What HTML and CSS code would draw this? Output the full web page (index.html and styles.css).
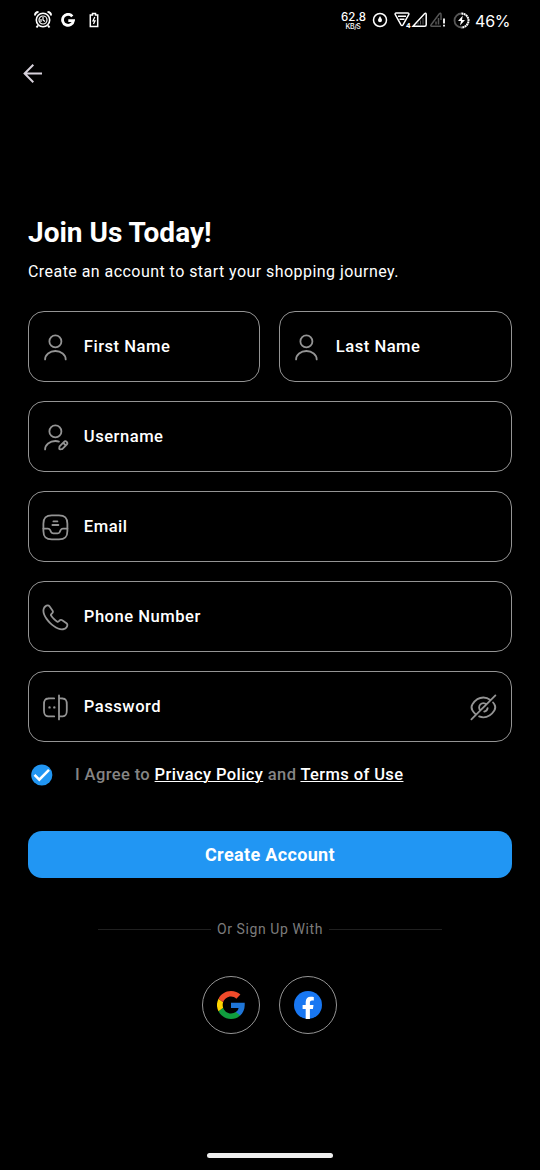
FILE: index.html
```html
<!DOCTYPE html>
<html lang="en">
<head>
<meta charset="utf-8">
<title>Create Account</title>
<link rel="stylesheet" href="styles.css">
</head>
<body>
<header class="status">
  <svg class="alarm" width="18" height="18" viewBox="0 0 18 18" fill="none" stroke="#fff"><circle cx="9" cy="9" r="6.7" stroke-width="1.6"/><circle cx="9" cy="9" r="4" stroke-width="1.200"/><path d="M1 4.500C1 2 2.500 1 4.500 1M13.500 1C15.500 1 17 2 17 4.500M4 14.500l-1.500 2M14 14.500l1.500 2" stroke-width="2"/><path d="M9 6v3l2 1.500M7 8v3" stroke-width="1.200"/></svg>
  <svg class="g-mono" width="14" height="14" viewBox="0 0 14 14" fill="none" stroke="#fff" stroke-width="2.800"><path d="M11.300 3.300A5.500 5.500 0 1 0 12.500 7.600H7.300"/></svg>
  <svg class="cell" width="10" height="16" viewBox="0 0 10 16" fill="none" stroke="#fff" stroke-width="1.500"><path d="M3.500 1.500h3V3h2.200v11.500H1.300V3h2.200z"/><path d="M5.800 5 4 8.800h2L4.500 12" stroke-width="1.300"/></svg>
  <div class="speed"><span class="rate">62.8</span><span class="unit">KB/S</span></div>
  <svg class="dial" width="16" height="16" viewBox="0 0 16 16"><circle cx="8" cy="8" r="6.500" fill="none" stroke="#fff" stroke-width="1.500"/><path d="M8 4c1 2 2 3 2 4.300a2 2 0 0 1-4 0C6 7 7 6 8 4z" fill="#fff"/></svg>
  <svg class="signals" width="52" height="18" viewBox="0 0 52 18" fill="none" stroke="#fff" stroke-width="1.500"><path d="M2.300 2h11.400c1.200 0 1.500.8 1 1.600L9 13.800c-.6 1-1.400 1-2 0L1.300 3.600c-.5-.8-.2-1.600 1-1.600zM4 5.200h8M5.500 8.200h5"/><path d="M19 15.200 30.500 2.700c.9-.8 1.700-.5 1.700.7v10.300c0 1-.5 1.500-1.500 1.500z"/><path d="M24 13.500v-2M26.500 13.500V9.500M29 13.500V7" stroke="#555" stroke-width="1"/><path d="M47 9V3.400c0-1.200-.8-1.500-1.700-.7L37.300 13.500c-.9 1-.6 1.700.5 1.700H47" stroke="#555"/><path d="M42 13.500v-3M44.500 13.500V7" stroke="#555"/><path d="M50 7.500v5M50 13.800v1.700" stroke-width="1.800"/><text x="12" y="17" class="net">4</text></svg>
  <svg class="charge" width="17" height="17" viewBox="0 0 17 17" fill="none"><circle cx="8.500" cy="8.500" r="7" stroke="#555" stroke-width="1.800"/><path d="M8.500 1.500a7 7 0 0 1 0 14" stroke="#fff" stroke-width="2" stroke-dasharray="1.700 .7"/><path d="M9.800 3.500 5 9h3l-1 4.500L12 8H9z" fill="#fff"/></svg>
  <span class="percent">46%</span>
</header>

<nav class="topbar">
  <svg width="20" height="20" viewBox="0 0 20 20" fill="none" stroke="#d8d2dc" stroke-width="2"><path d="M19 9.500H2M10.300 .8 1.600 9.500l8.700 8.700"/></svg>
</nav>

<main class="content">
  <h1 class="title">Join Us Today!</h1>
  <p class="subtitle">Create an account to start your shopping journey.</p>

  <form class="form">
    <div class="row">
      <div class="field"><svg class="icon" viewBox="0 0 24 24"><circle cx="12" cy="7" r="5"/><path d="M20.590 22c0-3.870-3.850-7-8.590-7s-8.590 3.130-8.590 7"/></svg><span class="label">First Name</span></div>
      <div class="field"><svg class="icon" viewBox="0 0 24 24"><circle cx="12" cy="7" r="5"/><path d="M20.590 22c0-3.870-3.850-7-8.590-7s-8.590 3.130-8.590 7"/></svg><span class="label last">Last Name</span></div>
    </div>
    <div class="field"><svg class="icon" viewBox="0 0 24 24"><circle cx="12" cy="7" r="5"/><path d="M19.210 15.740l-3.540 3.540c-.14.14-.27.4-.3.590l-.19 1.350c-.07.490.27.830.76.760l1.350-.19c.19-.03.46-.16.590-.3l3.540-3.540c.61-.61.9-1.320 0-2.220-.89-.89-1.600-.6-2.210.010zM18.700 16.250c.3 1.080 1.140 1.920 2.220 2.220M3.410 22c0-3.870 3.850-7 8.590-7 1.040 0 2.040.15 2.970.43"/></svg><span class="label">Username</span></div>
    <div class="field"><svg class="icon" viewBox="0 0 24 24"><path d="M9 22h6c5 0 7-2 7-7V9c0-5-2-7-7-7H9C4 2 2 4 2 9v6c0 5 2 7 7 7z"/><path d="M2 13h3.760c.76 0 1.450.43 1.790 1.110l.89 1.790C9 17 10 17 10.240 17h3.530c.76 0 1.450-.43 1.790-1.110l.89-1.790c.34-.68 1.030-1.110 1.790-1.110H22M10.340 7h3.330M9.500 10h5"/></svg><span class="label">Email</span></div>
    <div class="field"><svg class="icon" viewBox="0 0 24 24"><path d="M21.970 18.330c0 .36-.08.73-.25 1.090-.17.36-.39.7-.68 1.020-.49.54-1.030.93-1.640 1.180-.6.25-1.250.38-1.950.38-1.020 0-2.110-.24-3.260-.73s-2.300-1.150-3.440-1.980a28.750 28.750 0 0 1-3.280-2.800 28.400 28.400 0 0 1-2.790-3.270c-.82-1.140-1.480-2.280-1.960-3.410C2.240 8.670 2 7.580 2 6.540c0-.68.12-1.330.36-1.930.24-.61.62-1.170 1.150-1.670C4.150 2.310 4.850 2 5.590 2c.28 0 .56.06.81.18.26.12.49.3.67.56l2.320 3.270c.18.25.31.48.4.7.09.21.14.42.14.61 0 .24-.07.48-.21.71-.13.23-.32.47-.56.71l-.76.79c-.11.11-.16.24-.16.4 0 .08.01.15.03.23.03.08.06.14.08.2.18.33.49.76.93 1.280.45.52.93 1.050 1.450 1.580.54.53 1.060 1.020 1.590 1.470.52.44.95.74 1.290.92.05.02.11.05.18.08.08.03.16.04.25.04.17 0 .3-.06.41-.17l.76-.75c.25-.25.49-.44.72-.56.23-.14.46-.21.71-.21.19 0 .39.04.61.13.22.09.45.22.7.39l3.310 2.350c.26.18.44.39.55.64.1.25.16.5.16.78z"/></svg><span class="label">Phone Number</span></div>
    <div class="field"><svg class="icon" viewBox="0 0 24 24"><path d="M11.020 19.500H7.500c-.62 0-1.170-.02-1.660-.09C3.210 19.120 2.500 17.880 2.500 14.500v-5c0-3.380.71-4.620 3.340-4.910.49-.07 1.040-.09 1.660-.09h3.460M15.020 4.500h1.480c.62 0 1.170.02 1.660.09 2.630.29 3.340 1.530 3.340 4.910v5c0 3.380-.71 4.620-3.340 4.910-.49.07-1.040.09-1.660.09h-1.480M15 2v20"/><path d="M11.100 12h.01M7.100 12h.01" stroke-width="2"/></svg><span class="label">Password</span>
      <svg class="icon eye" viewBox="0 0 24 24"><path d="M14.530 9.470l-5.060 5.060a3.576 3.576 0 1 1 5.060-5.060zM17.820 5.770C16.070 4.450 14.070 3.730 12 3.730c-3.530 0-6.820 2.080-9.110 5.680-.9 1.410-.9 3.780 0 5.190.79 1.240 1.710 2.310 2.710 3.170M8.420 19.530c1.140.48 2.350.74 3.580.74 3.530 0 6.820-2.080 9.110-5.680.9-1.410.9-3.780 0-5.190-.33-.52-.69-1.010-1.060-1.470M15.510 12.700a3.565 3.565 0 0 1-2.820 2.820M9.470 14.530 2 22M22 2l-7.470 7.470"/></svg></div>
  </form>

  <div class="agree">
    <svg width="22" height="22" viewBox="0 0 22 22"><circle cx="10.800" cy="11" r="10.600" fill="#2196f3"/><path d="M3.500 10.800 8.300 15.600 18 5.800" fill="none" stroke="#fff" stroke-width="2.600"/></svg>
    <p class="terms">I Agree to <a>Privacy Policy</a> and <a>Terms of Use</a></p>
  </div>

  <button class="submit">Create Account</button>

  <div class="divider"><i></i><span>Or Sign Up With</span><i></i></div>

  <div class="social">
    <div class="circle"><svg width="28" height="28" viewBox="0 0 48 48"><path fill="#1f76d8" d="M47.500 20H24v9h13c-.6 3-2.300 5.500-4.800 7.200v6h7.700C44.400 38 47.500 31.800 47.500 24.500z"/><path fill="#109d3e" d="M24 48c6.500 0 11.900-2.100 15.900-5.800l-7.700-6c-2.200 1.400-4.900 2.300-8.200 2.300-6.300 0-11.600-4.200-13.500-9.900L2.600 34.800C6.500 42.600 14.600 48 24 48z"/><path fill="#ffd500" d="M10.500 28.600a14.300 14.300 0 0 1 0-9.200l-7.900-6.200a24 24 0 0 0 0 21.600z"/><path fill="#f04a2a" d="M24 9.500c3.500 0 6.700 1.200 9.200 3.600l6.900-6.900C35.900 2.400 30.500 0 24 0 14.600 0 6.500 5.400 2.600 13.200l7.900 6.200C12.400 13.700 17.700 9.500 24 9.500z"/></svg></div>
    <div class="circle"><svg width="28" height="28" viewBox="0 0 28 28"><circle cx="14" cy="14" r="14" fill="#1877f2"/><path d="M11.700 28V18H8.600v-4h3.100v-3c0-3.400 2-5.200 5-5.200 1.400 0 2.500.2 3.100.3v3.500h-1.700c-1.700 0-2.200 1-2.200 2.100V14h3.600l-.6 4h-3v10z" fill="#fff"/></svg></div>
  </div>
</main>
<footer class="home"><div class="pill"></div></footer>
</body>
</html>
```

FILE: styles.css
```css
* { box-sizing: border-box; }
body { margin: 0; width: 540px; height: 1170px; background: #000; color: #fff; font-family: Roboto, sans-serif; display: flex; flex-direction: column; overflow: hidden; }
svg { display: block; flex: none; }
.status { height: 40px; padding-left: 34px; display: flex; align-items: center; flex: none; }
.g-mono { margin-left: 9px; }
.cell { margin-left: 14px; }
.speed { margin-left: 241px; width: 26px; display: flex; flex-direction: column; align-items: center; }
.rate { font: 500 11.5px/12px Inter, sans-serif; padding-left: 1px; }
.unit { font: 500 7px/7px Inter, sans-serif; letter-spacing: -0.4px; }
.dial { margin-left: 6px; }
.signals { margin-left: 6px; }
.net { font: 700 8px Roboto, sans-serif; fill: #fff; stroke: none; }
.charge { margin-left: 7px; }
.percent { margin-left: 5px; padding-top: 1px; font: 400 16px/20px Inter, sans-serif; letter-spacing: -.2px; white-space: nowrap; }
.topbar { height: 68px; padding: 24px 23px 0; flex: none; }
.content { padding: 107px 28px 0; flex: 1; }
.title { margin: 0; font-size: 28px; line-height: 36px; font-weight: 700; }
.subtitle { margin: 9px 0 0; font-size: 16px; line-height: 24px; letter-spacing: .45px; white-space: nowrap; }
.form { margin-top: 27px; display: flex; flex-direction: column; gap: 19px; }
.row { display: grid; grid-template-columns: 232px 233px; gap: 19px; }
.field { height: 71px; border: 1px solid #949494; border-radius: 16px; display: flex; align-items: center; padding: 1px 13px 0 12px; }
.icon { width: 28.8px; height: 28.8px; fill: none; stroke: #949494; stroke-width: 1.5; stroke-linecap: round; stroke-linejoin: round; }
.label { margin-left: 14px; padding-bottom: 1px; font-size: 16.6px; line-height: 20px; font-weight: 500; letter-spacing: .5px; }
.last { margin-left: 15px; }
.eye { margin-left: auto; }
.agree { margin-top: 21px; padding-left: 3px; display: flex; align-items: center; height: 24px; }
.terms { margin: 0 0 0 22px; color: #858585; font-size: 16.5px; line-height: 20px; font-weight: 500; letter-spacing: .39px; white-space: nowrap; }
.terms a { color: #fff; text-decoration: underline; text-decoration-thickness: 1px; }
.submit { display: block; width: 100%; height: 47px; margin-top: 44px; padding: 0; border: 0; border-radius: 14px; background: #2196f3; color: #fff; font: 700 18px Roboto, sans-serif; letter-spacing: .35px; }
.divider { margin-top: 41px; padding: 0 70px; height: 20px; display: flex; align-items: center; gap: 6px; color: #7c7c7c; font-size: 14px; letter-spacing: .6px; white-space: nowrap; }
.divider i { flex: 1; height: 1px; background: #202020; }
.social { margin-top: 37px; padding-right: 1px; display: flex; justify-content: center; gap: 19px; }
.circle { width: 58px; height: 58px; border: 1px solid #949494; border-radius: 50%; display: flex; align-items: center; justify-content: center; }
.home { height: 17px; display: flex; justify-content: center; flex: none; }
.pill { width: 126px; height: 5px; border-radius: 3px; background: #eee; }
```
